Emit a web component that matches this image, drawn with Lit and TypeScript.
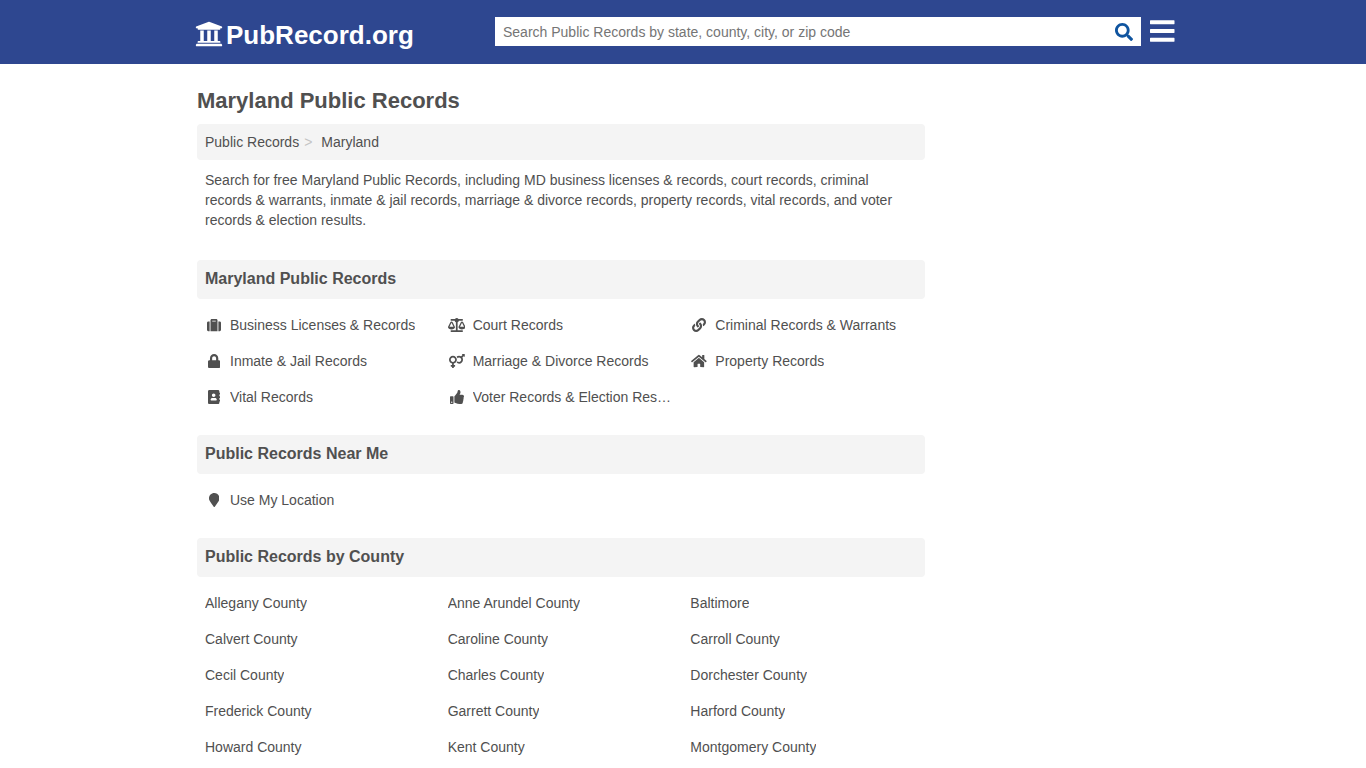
import { LitElement, html, css, svg } from "lit";
import { customElement, property } from "lit/decorators.js";

interface Glyph {
  width: number;
  path: string;
}

const glyphs: Record<string, Glyph> = {
  university: {
    width: 512,
    path: "M496 128v16a8 8 0 0 1-8 8h-24v12c0 6.627-5.373 12-12 12H60c-6.627 0-12-5.373-12-12v-12H24a8 8 0 0 1-8-8v-16a8 8 0 0 1 4.941-7.392l232-88a7.996 7.996 0 0 1 6.118 0l232 88A8 8 0 0 1 496 128zm-24 304H40c-13.255 0-24 10.745-24 24v16a8 8 0 0 0 8 8h464a8 8 0 0 0 8-8v-16c0-13.255-10.745-24-24-24zM96 192v192H60c-6.627 0-12 5.373-12 12v20h416v-20c0-6.627-5.373-12-12-12h-36V192h-64v192h-64V192h-64v192h-64V192H96z",
  },
  search: {
    width: 512,
    path: "M505 442.7L405.3 343c-4.5-4.5-10.6-7-17-7H372c27.6-35.3 44-79.7 44-128C416 93.1 322.9 0 208 0S0 93.1 0 208s93.1 208 208 208c48.3 0 92.7-16.4 128-44v16.3c0 6.4 2.5 12.5 7 17l99.7 99.7c9.4 9.4 24.6 9.4 33.9 0l28.3-28.3c9.4-9.4 9.4-24.6.1-34zM208 336c-70.7 0-128-57.2-128-128 0-70.7 57.2-128 128-128 70.7 0 128 57.2 128 128 0 70.7-57.2 128-128 128z",
  },
  bars: {
    width: 448,
    path: "M8 60h432a8 8 0 0 1 8 8v56a8 8 0 0 1-8 8H8a8 8 0 0 1-8-8V68a8 8 0 0 1 8-8zM8 220h432a8 8 0 0 1 8 8v56a8 8 0 0 1-8 8H8a8 8 0 0 1-8-8v-56a8 8 0 0 1 8-8zM8 380h432a8 8 0 0 1 8 8v56a8 8 0 0 1-8 8H8a8 8 0 0 1-8-8v-56a8 8 0 0 1 8-8z",
  },
  suitcase: {
    width: 512,
    path: "M128 480h256V80c0-26.5-21.5-48-48-48H176c-26.5 0-48 21.5-48 48v400zm64-384h128v32H192V96zm320 80v256c0 26.5-21.5 48-48 48h-48V128h48c26.5 0 48 21.5 48 48zM96 480H48c-26.5 0-48-21.5-48-48V176c0-26.5 21.5-48 48-48h48v352z",
  },
  scale: {
    width: 640,
    path: "M256 336h-.02c0-16.18 1.34-8.73-85.05-181.51-17.65-35.29-68.19-35.36-85.87 0C-2.06 328.75.02 320.33.02 336H0c0 44.18 57.31 80 128 80s128-35.82 128-80zM128 176l72 144H56l72-144zm511.98 160c0-16.18 1.34-8.73-85.05-181.51-17.65-35.29-68.19-35.36-85.87 0-87.12 174.26-85.04 165.84-85.04 181.51H384c0 44.18 57.31 80 128 80s128-35.82 128-80h-.02zM440 320l72-144 72 144H440zm88 128H352V153.25c23.51-10.29 41.16-31.48 46.39-57.25H528c8.84 0 16-7.16 16-16V48c0-8.84-7.16-16-16-16H383.64C369.04 12.68 346.09 0 320 0s-49.04 12.68-63.64 32H112c-8.84 0-16 7.16-16 16v32c0 8.84 7.16 16 16 16h129.61c5.23 25.76 22.87 46.96 46.39 57.25V448H112c-8.84 0-16 7.16-16 16v32c0 8.84 7.16 16 16 16h416c8.84 0 16-7.16 16-16v-32c0-8.84-7.16-16-16-16z",
  },
  link: {
    width: 512,
    path: "M326.612 185.391c59.747 59.809 58.927 155.698.36 214.59-.11.12-.24.25-.36.37l-67.2 67.2c-59.27 59.27-155.699 59.262-214.96 0-59.27-59.26-59.27-155.7 0-214.96l37.106-37.106c9.84-9.84 26.786-3.3 27.294 10.606.648 17.722 3.826 35.527 9.69 52.721 1.986 5.822.567 12.262-3.783 16.612l-13.087 13.087c-28.026 28.026-28.905 73.66-1.155 101.96 28.024 28.579 74.086 28.749 102.325.51l67.2-67.19c28.191-28.191 28.073-73.757 0-101.83-3.701-3.694-7.429-6.564-10.341-8.569a16.037 16.037 0 0 1-6.947-12.606c-.396-10.567 3.348-21.456 11.698-29.806l21.054-21.055c5.521-5.521 14.182-6.199 20.584-1.731a152.482 152.482 0 0 1 20.522 17.197zM467.547 44.449c-59.261-59.262-155.69-59.27-214.96 0l-67.2 67.2c-.12.12-.25.25-.36.37-58.566 58.892-59.387 154.781.36 214.59a152.454 152.454 0 0 0 20.521 17.196c6.402 4.468 15.064 3.789 20.584-1.731l21.054-21.055c8.35-8.35 12.094-19.239 11.698-29.806a16.037 16.037 0 0 0-6.947-12.606c-2.912-2.005-6.64-4.875-10.341-8.569-28.073-28.073-28.191-73.639 0-101.83l67.2-67.19c28.239-28.239 74.3-28.069 102.325.51 27.75 28.3 26.872 73.934-1.155 101.96l-13.087 13.087c-4.35 4.35-5.769 10.79-3.783 16.612 5.864 17.194 9.042 34.999 9.69 52.721.509 13.906 17.454 20.446 27.294 10.606l37.106-37.106c59.271-59.259 59.271-155.699.001-214.959z",
  },
  lock: {
    width: 448,
    path: "M400 224h-24v-72C376 68.2 307.8 0 224 0S72 68.2 72 152v72H48c-26.5 0-48 21.5-48 48v192c0 26.5 21.5 48 48 48h352c26.5 0 48-21.5 48-48V272c0-26.5-21.5-48-48-48zm-104 0H152v-72c0-39.7 32.3-72 72-72s72 32.3 72 72v72z",
  },
  couple: {
    width: 576,
    path: "M564 0h-79c-10.7 0-16 12.9-8.5 20.5l16.9 16.9-48.7 48.7C422.5 72.1 396.2 64 368 64c-33.7 0-64.6 11.6-89.2 30.9 14 16.7 25 36 32.1 57.1 14.5-14.8 34.7-24 57.1-24 44.1 0 80 35.9 80 80s-35.9 80-80 80c-22.3 0-42.6-9.2-57.1-24-7.1 21.1-18 40.4-32.1 57.1 24.5 19.4 55.5 30.9 89.2 30.9 79.5 0 144-64.5 144-144 0-28.2-8.1-54.5-22.1-76.7l48.7-48.7 16.9 16.9c2.4 2.4 5.4 3.5 8.4 3.5 6.2 0 12.1-4.8 12.1-12V12c0-6.6-5.4-12-12-12zM144 64C64.5 64 0 128.5 0 208c0 68.5 47.9 125.9 112 140.4V400H76c-6.6 0-12 5.4-12 12v40c0 6.6 5.4 12 12 12h36v36c0 6.6 5.4 12 12 12h40c6.6 0 12-5.4 12-12v-36h36c6.6 0 12-5.4 12-12v-40c0-6.6-5.4-12-12-12h-36v-51.6c64.1-14.6 112-71.9 112-140.4 0-79.5-64.5-144-144-144zm0 224c-44.1 0-80-35.9-80-80s35.9-80 80-80 80 35.9 80 80-35.9 80-80 80z",
  },
  home: {
    width: 576,
    path: "M280.37 148.26L96 300.11V464a16 16 0 0 0 16 16l112.06-.29a16 16 0 0 0 15.92-16V368a16 16 0 0 1 16-16h64a16 16 0 0 1 16 16v95.64a16 16 0 0 0 16 16.05L464 480a16 16 0 0 0 16-16V300L295.67 148.26a12.19 12.19 0 0 0-15.3 0zM571.6 251.47L488 182.56V44.05a12 12 0 0 0-12-12h-56a12 12 0 0 0-12 12v72.61L318.47 43a48 48 0 0 0-61 0L4.34 251.47a12 12 0 0 0-1.6 16.9l25.5 31A12 12 0 0 0 45.15 301l235.22-193.74a12.19 12.19 0 0 1 15.3 0L530.9 301a12 12 0 0 0 16.9-1.6l25.5-31a12 12 0 0 0-1.7-16.93z",
  },
  addressBook: {
    width: 448,
    path: "M436 160c6.6 0 12-5.4 12-12v-40c0-6.6-5.4-12-12-12h-20V48c0-26.5-21.5-48-48-48H48C21.5 0 0 21.5 0 48v416c0 26.5 21.5 48 48 48h320c26.5 0 48-21.5 48-48v-48h20c6.6 0 12-5.4 12-12v-40c0-6.6-5.4-12-12-12h-20v-64h20c6.6 0 12-5.4 12-12v-40c0-6.6-5.4-12-12-12h-20v-64h20zm-228-32c35.3 0 64 28.7 64 64s-28.7 64-64 64-64-28.7-64-64 28.7-64 64-64zm112 236.8c0 10.6-10 19.2-22.4 19.2H118.4C106 384 96 375.4 96 364.8v-19.2c0-31.8 30.1-57.6 67.2-57.6h5c12.3 5.1 25.7 8 39.8 8s27.6-2.9 39.8-8h5c37.1 0 67.2 25.8 67.2 57.6v19.2z",
  },
  thumbsUp: {
    width: 512,
    path: "M104 224H24c-13.255 0-24 10.745-24 24v240c0 13.255 10.745 24 24 24h80c13.255 0 24-10.745 24-24V248c0-13.255-10.745-24-24-24zM64 472c-13.255 0-24-10.745-24-24s10.745-24 24-24 24 10.745 24 24-10.745 24-24 24zM384 81.452c0 42.416-25.97 66.208-33.277 94.548h101.723c33.397 0 59.397 27.746 59.553 58.098.084 17.938-7.546 37.249-19.439 49.197l-.11.11c9.836 23.337 8.237 56.037-9.308 79.469 8.681 25.895-.069 57.704-16.382 74.757 4.298 17.598 2.244 32.575-6.148 44.632C440.202 511.587 389.616 512 346.839 512l-2.845-.001c-48.287-.017-87.806-17.598-119.56-31.725-15.957-7.099-36.821-15.887-52.651-16.178-6.54-.12-11.783-5.457-11.783-11.998v-213.77c0-3.2 1.282-6.271 3.558-8.521 39.614-39.144 56.648-80.587 89.117-113.111 14.804-14.832 20.188-37.236 25.393-58.902C282.515 39.293 291.817 0 312 0c24 0 72 8 72 81.452z",
  },
  marker: {
    width: 384,
    path: "M172.268 501.67C26.97 291.031 0 269.413 0 192 0 85.961 85.961 0 192 0s192 85.961 192 192c0 77.413-26.97 99.031-172.268 309.67-9.535 13.774-29.93 13.773-39.464 0z",
  },
};

@customElement("pr-icon")
class PrIcon extends LitElement {
  @property() name = "";

  static styles = css`
    :host {
      display: inline-flex;
      justify-content: center;
      height: 14px;
    }
    .glyph {
      display: block;
      height: 100%;
      fill: currentColor;
    }
  `;

  render() {
    const g = glyphs[this.name];
    return html`<svg class="glyph" viewBox="0 0 ${g.width} 512" aria-hidden="true">
      ${svg`<path d=${g.path}></path>`}
    </svg>`;
  }
}

interface Entry {
  label: string;
  icon?: string;
}

@customElement("record-section")
class RecordSection extends LitElement {
  @property() heading = "";
  @property({ attribute: false }) entries: Entry[] = [];

  static styles = css`
    :host {
      display: block;
    }
    .heading {
      margin: 0 0 8px;
      padding: 9px 8px 10px;
      border-radius: 4px;
      background: #f4f4f4;
      font-size: 16px;
      line-height: 20px;
      font-weight: bold;
    }
    .list {
      display: grid;
      grid-template-columns: repeat(3, minmax(0, 1fr));
      margin: 0;
      padding: 0;
      list-style: none;
    }
    .link {
      display: flex;
      align-items: center;
      gap: 7px;
      padding: 8px;
      color: inherit;
      text-decoration: none;
      line-height: 20px;
    }
    .link:hover {
      text-decoration: underline;
    }
    .icon {
      flex: none;
      width: 18px;
    }
    .label {
      overflow: hidden;
      text-overflow: ellipsis;
      white-space: nowrap;
    }
  `;

  render() {
    return html`
      <h2 class="heading">${this.heading}</h2>
      <ul class="list">
        ${this.entries.map(
          (e) => html`<li>
            <a class="link" href="#">
              ${e.icon ? html`<pr-icon class="icon" name=${e.icon}></pr-icon>` : null}
              <span class="label">${e.label}</span>
            </a>
          </li>`
        )}
      </ul>
    `;
  }
}

const recordTypes: Entry[] = [
  { label: "Business Licenses & Records", icon: "suitcase" },
  { label: "Court Records", icon: "scale" },
  { label: "Criminal Records & Warrants", icon: "link" },
  { label: "Inmate & Jail Records", icon: "lock" },
  { label: "Marriage & Divorce Records", icon: "couple" },
  { label: "Property Records", icon: "home" },
  { label: "Vital Records", icon: "addressBook" },
  { label: "Voter Records & Election Results", icon: "thumbsUp" },
];

const nearMe: Entry[] = [{ label: "Use My Location", icon: "marker" }];

const counties: Entry[] = [
  "Allegany County",
  "Anne Arundel County",
  "Baltimore",
  "Calvert County",
  "Caroline County",
  "Carroll County",
  "Cecil County",
  "Charles County",
  "Dorchester County",
  "Frederick County",
  "Garrett County",
  "Harford County",
  "Howard County",
  "Kent County",
  "Montgomery County",
].map((label) => ({ label }));

@customElement("app-root")
class AppRoot extends LitElement {
  static styles = css`
    :host {
      display: block;
      background: #fff;
      color: #505050;
      font-family: "Liberation Sans", Arial, Helvetica, sans-serif;
      font-size: 14px;
      line-height: 20px;
    }
    .header {
      background: #2e4790;
    }
    .bar {
      box-sizing: border-box;
      display: flex;
      align-items: flex-start;
      max-width: 980px;
      min-height: 64px;
      margin: 0 auto;
      padding: 17px 0 0 2px;
    }
    .brand {
      display: flex;
      align-items: center;
      gap: 3px;
      width: 300px;
      padding-top: 3px;
      color: #fff;
      font-size: 26px;
      line-height: 30px;
      font-weight: bold;
      text-decoration: none;
    }
    .brand-icon {
      height: 28px;
      margin-top: -2px;
    }
    .search {
      flex: 1;
      display: flex;
      height: 29px;
      background: #fff;
    }
    .field {
      flex: 1;
      min-width: 0;
      padding: 0 8px;
      border: 0;
      background: transparent;
      color: #505050;
      font: inherit;
      outline: none;
    }
    .field::placeholder {
      color: #757575;
      opacity: 1;
    }
    .button {
      display: flex;
      align-items: center;
      padding: 0;
      border: 0;
      background: transparent;
      cursor: pointer;
    }
    .submit {
      padding: 0 8px;
      color: #0f549f;
    }
    .submit-icon {
      height: 18px;
    }
    .menu {
      margin: 0 -2px 0 9px;
      color: #fff;
    }
    .menu-icon {
      width: 25px;
      height: 28px;
    }
    .page {
      max-width: 972px;
      margin: 0 auto;
      padding-top: 23px;
    }
    .main {
      display: flex;
      flex-direction: column;
      max-width: 728px;
    }
    .title {
      margin: 0 0 10px;
      font-size: 22px;
      line-height: 27px;
      font-weight: bold;
    }
    .crumbs {
      display: flex;
      padding: 8px;
      border-radius: 4px;
      background: #f4f4f4;
    }
    .crumb {
      color: inherit;
      text-decoration: none;
    }
    .separator {
      padding: 0 9px 0 5px;
      color: #c4c4c4;
    }
    .intro {
      margin: 0;
      padding: 10px 8px 30px;
    }
    .sections {
      display: flex;
      flex-direction: column;
      gap: 20px;
    }
  `;

  render() {
    return html`
      <header class="header">
        <div class="bar">
          <a class="brand" href="#">
            <pr-icon class="brand-icon" name="university"></pr-icon>
            <span>PubRecord.org</span>
          </a>
          <form class="search" role="search" @submit=${(e: Event) => e.preventDefault()}>
            <input
              class="field"
              type="text"
              aria-label="Search Public Records"
              placeholder="Search Public Records by state, county, city, or zip code"
            />
            <button class="button submit" type="submit" aria-label="Search">
              <pr-icon class="submit-icon" name="search"></pr-icon>
            </button>
          </form>
          <button class="button menu" type="button" aria-label="Menu">
            <pr-icon class="menu-icon" name="bars"></pr-icon>
          </button>
        </div>
      </header>
      <div class="page">
        <main class="main">
          <h1 class="title">Maryland Public Records</h1>
          <nav class="crumbs" aria-label="Breadcrumb">
            <a class="crumb" href="#">Public Records</a>
            <span class="separator" aria-hidden="true">&gt;</span>
            <a class="crumb" href="#">Maryland</a>
          </nav>
          <p class="intro">
            Search for free Maryland Public Records, including MD business licenses &amp; records,
            court records, criminal records &amp; warrants, inmate &amp; jail records, marriage
            &amp; divorce records, property records, vital records, and voter records &amp;
            election results.
          </p>
          <div class="sections">
            <record-section heading="Maryland Public Records" .entries=${recordTypes}></record-section>
            <record-section heading="Public Records Near Me" .entries=${nearMe}></record-section>
            <record-section heading="Public Records by County" .entries=${counties}></record-section>
          </div>
        </main>
      </div>
    `;
  }
}
